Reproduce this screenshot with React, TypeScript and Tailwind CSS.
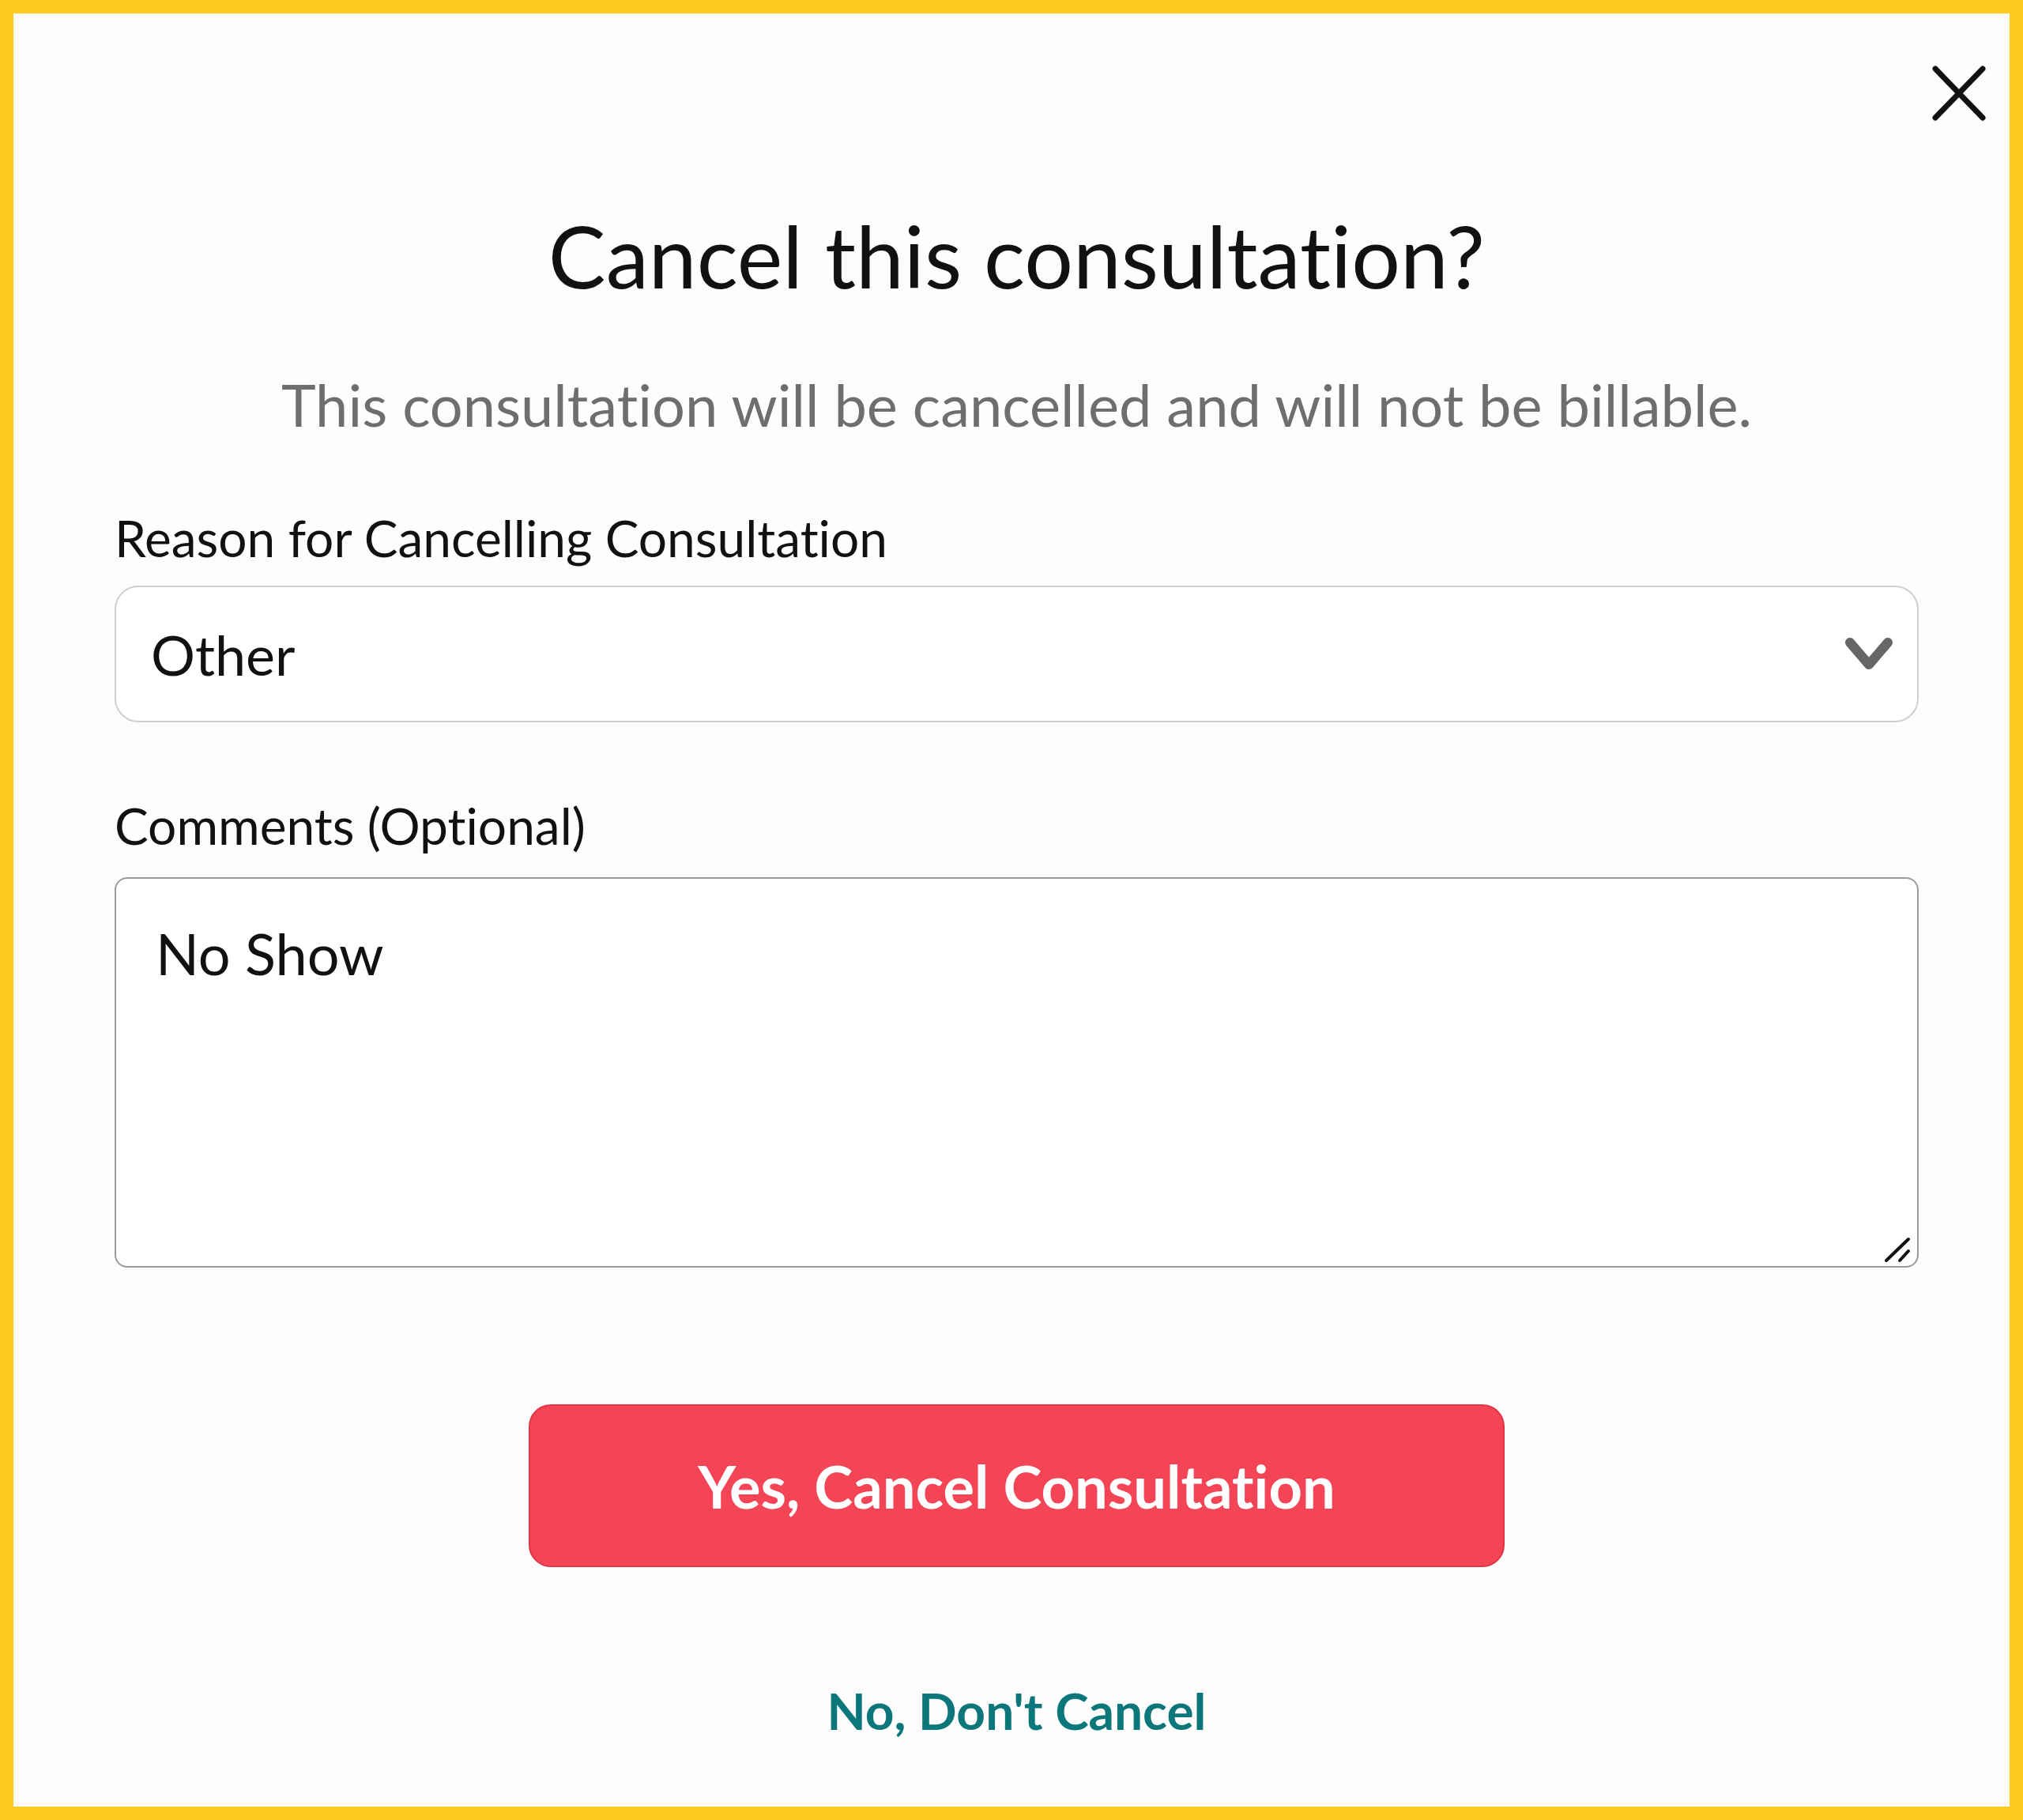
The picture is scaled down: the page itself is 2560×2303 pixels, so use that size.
export default function App() {
  return (
    <div className="relative flex h-[2303px] w-[2560px] flex-col border-[17px] border-[#FDCB1E] bg-[#FDFDFD] pl-[128px] pr-[115px] pt-[242px] font-['Lato',sans-serif] text-[#111] [font-variant-ligatures:none]">
      {/* close */}
      <button className="absolute right-[30px] top-[66px] flex h-[70px] w-[68px] items-center justify-center" aria-label="Close">
        <svg width="68" height="70" viewBox="0 0 68 70" fill="none" aria-hidden>
          <path d="M4 4L64 66M64 4L4 66" stroke="#111" strokeWidth="7" strokeLinecap="round" />
        </svg>
      </button>

      <h1 className="text-center text-[109px] leading-[128px] font-normal">Cancel this consultation?</h1>
      <p className="mt-[80px] text-center text-[74px] leading-[90px] text-[#6e6e6e]">
        This consultation will be cancelled and will not be billable.
      </p>

      <label className="mt-[79px] text-[64px] leading-[90px]">Reason for Cancelling Consultation</label>
      <div className="mt-[15px] flex h-[173px] items-center justify-between rounded-[30px] border-2 border-[#cfcfcf] bg-white pl-[44px] pr-[30px]">
        <span className="text-[70px] leading-[84px]">Other</span>
        <svg width="62" height="43" viewBox="0 0 62 43" fill="none" aria-hidden>
          <path d="M7 7L31 35L55 7" stroke="#666" strokeWidth="12" strokeLinecap="round" strokeLinejoin="round" />
        </svg>
      </div>

      <label className="mt-[86px] text-[64px] leading-[90px]">Comments (Optional)</label>
      <div className="relative mt-[20px] h-[494px] rounded-[16px] border-2 border-[#9a9a9a] bg-white pl-[50px] pt-[51px]">
        <span className="text-[72px] leading-[86px]">No Show</span>
        <svg className="absolute bottom-[4px] right-[8px]" width="34" height="34" viewBox="0 0 34 34" fill="none" aria-hidden>
          <path d="M3 31L31 4M20 31L31 19" stroke="#111" strokeWidth="4" strokeLinecap="round" />
        </svg>
      </div>

      <div className="mt-[173px] flex flex-col items-center">
        <button className="flex h-[206px] w-[1235px] items-center justify-center rounded-[28px] border-2 border-[#df3547] bg-[#F44556] text-[74px] font-bold text-white">
          Yes, Cancel Consultation
        </button>
        <button className="mt-[143px] text-[64px] leading-[77px] font-bold text-[#0b777b]">No, Don't Cancel</button>
      </div>
    </div>
  );
}
